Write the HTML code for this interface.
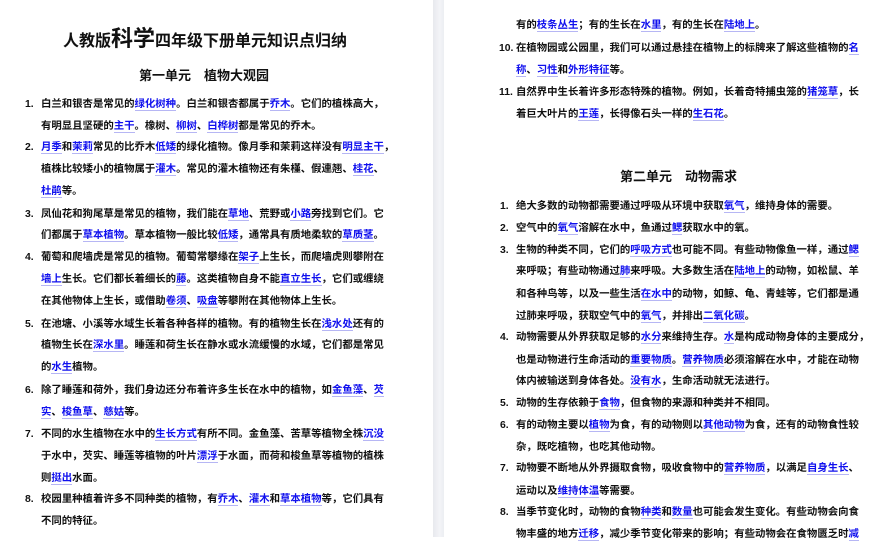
<!DOCTYPE html>
<html><head><meta charset="utf-8"><style>
*{margin:0;padding:0}
body{width:887px;height:537px;overflow:hidden;background:#fff;position:relative;font-family:"Liberation Sans","Noto Sans CJK SC",sans-serif;color:#111;font-weight:bold}
.gap{position:absolute;left:433px;top:0;width:11px;height:537px;background:linear-gradient(90deg,#e8e9ee,#f3f4f7 60%,#eceef2)}
.l{position:absolute;font-size:10.4px;line-height:16px;height:16px;white-space:nowrap;overflow:visible}
.f{text-align:justify;text-align-last:justify;width:338px}
.n{position:absolute;font-size:10.4px;line-height:16px}
b{color:#1010ee;border-bottom:1.5px solid #b6b6f4;font-weight:bold}
.L{left:41px}.R{left:516px}
.h{position:absolute;font-size:13px;font-weight:bold;white-space:nowrap}
</style></head><body>
<div class="gap"></div>
<div class="h" style="left:63px;top:27px;font-size:16px;line-height:24px">人教版<span style="font-size:22px">科学</span>四年级下册单元知识点归纳</div>
<div class="h" style="left:139px;top:65px">第一单元　植物大观园</div>

<div class="n" style="left:25px;top:97px">1.</div>
<div class="l L f" style="top:97px">白兰和银杏是常见的<b>绿化树种</b>。白兰和银杏都属于<b>乔木</b>。它们的植株高大，</div>
<div class="l L" style="top:119px">有明显且坚硬的<b>主干</b>。橡树、<b>柳树</b>、<b>白桦树</b>都是常见的乔木。</div>
<div class="n" style="left:25px;top:140px">2.</div>
<div class="l L f" style="top:140px"><b>月季</b>和<b>茉莉</b>常见的比乔木<b>低矮</b>的绿化植物。像月季和茉莉这样没有<b>明显主干</b>，</div>
<div class="l L f" style="top:162px">植株比较矮小的植物属于<b>灌木</b>。常见的灌木植物还有朱槿、假連翘、<b>桂花</b>、</div>
<div class="l L" style="top:184px"><b>杜鹃</b>等。</div>
<div class="n" style="left:25px;top:207px">3.</div>
<div class="l L f" style="top:207px">凤仙花和狗尾草是常见的植物，我们能在<b>草地</b>、荒野或<b>小路</b>旁找到它们。它</div>
<div class="l L f" style="top:228px">们都属于<b>草本植物</b>。草本植物一般比较<b>低矮</b>，通常具有质地柔软的<b>草质茎</b>。</div>
<div class="n" style="left:25px;top:250px">4.</div>
<div class="l L f" style="top:250px">葡萄和爬墙虎是常见的植物。葡萄常攀缘在<b>架子</b>上生长，而爬墙虎则攀附在</div>
<div class="l L f" style="top:272px"><b>墙上</b>生长。它们都长着细长的<b>藤</b>。这类植物自身不能<b>直立生长</b>，它们或缠绕</div>
<div class="l L" style="top:294px">在其他物体上生长，或借助<b>卷须</b>、<b>吸盘</b>等攀附在其他物体上生长。</div>
<div class="n" style="left:25px;top:317px">5.</div>
<div class="l L f" style="top:317px">在池塘、小溪等水域生长着各种各样的植物。有的植物生长在<b>浅水处</b>还有的</div>
<div class="l L f" style="top:338px">植物生长在<b>深水里</b>。睡莲和荷生长在静水或水流缓慢的水域，它们都是常见</div>
<div class="l L" style="top:360px">的<b>水生</b>植物。</div>
<div class="n" style="left:25px;top:383px">6.</div>
<div class="l L f" style="top:383px">除了睡莲和荷外，我们身边还分布着许多生长在水中的植物，如<b>金鱼藻</b>、<b>芡</b></div>
<div class="l L" style="top:405px"><b>实</b>、<b>梭鱼草</b>、<b>慈姑</b>等。</div>
<div class="n" style="left:25px;top:427px">7.</div>
<div class="l L f" style="top:427px">不同的水生植物在水中的<b>生长方式</b>有所不同。金鱼藻、苦草等植物全株<b>沉没</b></div>
<div class="l L f" style="top:449px">于水中，芡实、睡莲等植物的叶片<b>漂浮</b>于水面，而荷和梭鱼草等植物的植株</div>
<div class="l L" style="top:471px">则<b>挺出</b>水面。</div>
<div class="n" style="left:25px;top:492px">8.</div>
<div class="l L f" style="top:492px">校园里种植着许多不同种类的植物，有<b>乔木</b>、<b>灌木</b>和<b>草本植物</b>等，它们具有</div>
<div class="l L" style="top:514px">不同的特征。</div>

<div class="l R" style="top:18px">有的<b>枝条丛生</b>；有的生长在<b>水里</b>，有的生长在<b>陆地上</b>。</div>
<div class="n" style="left:499px;top:41px">10.</div>
<div class="l R f" style="top:41px">在植物园或公园里，我们可以通过悬挂在植物上的标牌来了解这些植物的<b>名</b></div>
<div class="l R" style="top:63px"><b>称</b>、<b>习性</b>和<b>外形特征</b>等。</div>
<div class="n" style="left:499px;top:85px">11.</div>
<div class="l R f" style="top:85px">自然界中生长着许多形态特殊的植物。例如，长着奇特捕虫笼的<b>猪笼草</b>，长</div>
<div class="l R" style="top:107px">着巨大叶片的<b>王莲</b>，长得像石头一样的<b>生石花</b>。</div>
<div class="h" style="left:620px;top:166px">第二单元　动物需求</div>
<div class="n" style="left:500px;top:199px">1.</div>
<div class="l R" style="top:199px">绝大多数的动物都需要通过呼吸从环境中获取<b>氧气</b>，维持身体的需要。</div>
<div class="n" style="left:500px;top:221px">2.</div>
<div class="l R" style="top:221px">空气中的<b>氧气</b>溶解在水中，鱼通过<b>鳃</b>获取水中的氧。</div>
<div class="n" style="left:500px;top:243px">3.</div>
<div class="l R f" style="top:243px">生物的种类不同，它们的<b>呼吸方式</b>也可能不同。有些动物像鱼一样，通过<b>鳃</b></div>
<div class="l R f" style="top:264px">来呼吸；有些动物通过<b>肺</b>来呼吸。大多数生活在<b>陆地上</b>的动物，如松鼠、羊</div>
<div class="l R f" style="top:287px">和各种鸟等，以及一些生活<b>在水中</b>的动物，如鲸、龟、青蛙等，它们都是通</div>
<div class="l R" style="top:309px">过肺来呼吸，获取空气中的<b>氧气</b>，并排出<b>二氧化碳</b>。</div>
<div class="n" style="left:500px;top:330px">4.</div>
<div class="l R f" style="top:330px">动物需要从外界获取足够的<b>水分</b>来维持生存。<b>水</b>是构成动物身体的主要成分，</div>
<div class="l R f" style="top:353px">也是动物进行生命活动的<b>重要物质</b>。<b>营养物质</b>必须溶解在水中，才能在动物</div>
<div class="l R" style="top:374px">体内被输送到身体各处。<b>没有水</b>，生命活动就无法进行。</div>
<div class="n" style="left:500px;top:396px">5.</div>
<div class="l R" style="top:396px">动物的生存依赖于<b>食物</b>，但食物的来源和种类并不相同。</div>
<div class="n" style="left:500px;top:418px">6.</div>
<div class="l R f" style="top:418px">有的动物主要以<b>植物</b>为食，有的动物则以<b>其他动物</b>为食，还有的动物食性较</div>
<div class="l R" style="top:440px">杂，既吃植物，也吃其他动物。</div>
<div class="n" style="left:500px;top:461px">7.</div>
<div class="l R f" style="top:461px">动物要不断地从外界摄取食物，吸收食物中的<b>营养物质</b>，以满足<b>自身生长</b>、</div>
<div class="l R" style="top:484px">运动以及<b>维持体温</b>等需要。</div>
<div class="n" style="left:500px;top:505px">8.</div>
<div class="l R f" style="top:505px">当季节变化时，动物的食物<b>种类</b>和<b>数量</b>也可能会发生变化。有些动物会向食</div>
<div class="l R f" style="top:527px">物丰盛的地方<b>迁移</b>，减少季节变化带来的影响；有些动物会在食物匮乏时<b>减</b></div>
</body></html>
